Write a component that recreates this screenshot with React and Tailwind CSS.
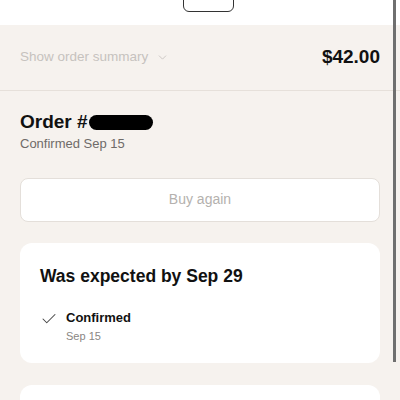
import { ChevronDown, Check } from "lucide-react";

function App() {
  return (
    <div className="relative h-[400px] w-[400px] overflow-hidden bg-[#f6f2ee] font-['Liberation_Sans',Arial,sans-serif] text-[#111]">
      {/* top strip */}
      <div className="flex h-[25px] justify-center bg-white pl-[16px]">
        <div className="-mt-[10px] h-[22px] w-[51px] rounded-[6px] border-[1.5px] border-[#333]" />
      </div>

      {/* summary bar */}
      <div className="flex h-[66px] items-center justify-between border-b border-[#e6e0da] px-5">
        <div className="flex items-center gap-2 text-[13.5px] text-[#c6c2be]">
          Show order summary
          <ChevronDown size={13} strokeWidth={1.6} />
        </div>
        <div className="text-[19px] font-bold">$42.00</div>
      </div>

      <div className="px-5">
        <div className="mt-[19px] flex items-center text-[19px] font-bold leading-6">
          Order #
          <span className="ml-[1px] inline-block h-[15px] w-[64px] rounded-[8px] bg-black" />
        </div>
        <div className="text-[13px] text-[#6f6b68]">Confirmed Sep 15</div>

        <button className="mt-[24px] flex h-[44px] w-full items-center justify-center rounded-[8px] border border-[#e4dfda] bg-white text-[14px] text-[#b4b1ae]">
          Buy again
        </button>

        <div className="mt-[21px] h-[120px] rounded-[12px] bg-white px-5 pt-[20px]">
          <div className="text-[17.5px] font-bold">Was expected by Sep 29</div>
          <div className="mt-[21px] flex gap-[8px]">
            <Check size={18} strokeWidth={1.4} className="text-[#444]" />
            <div>
              <div className="text-[13px] font-bold leading-4">Confirmed</div>
              <div className="mt-[2px] text-[11px] text-[#8a8683]">Sep 15</div>
            </div>
          </div>
        </div>

        <div className="mt-[22px] h-[60px] rounded-[12px] bg-white" />
      </div>

      {/* scroll indicator */}
      <div className="absolute right-[4px] top-0 h-[362px] w-[3px] bg-[#6f6f6f]" />
    </div>
  );
}

export default App;
